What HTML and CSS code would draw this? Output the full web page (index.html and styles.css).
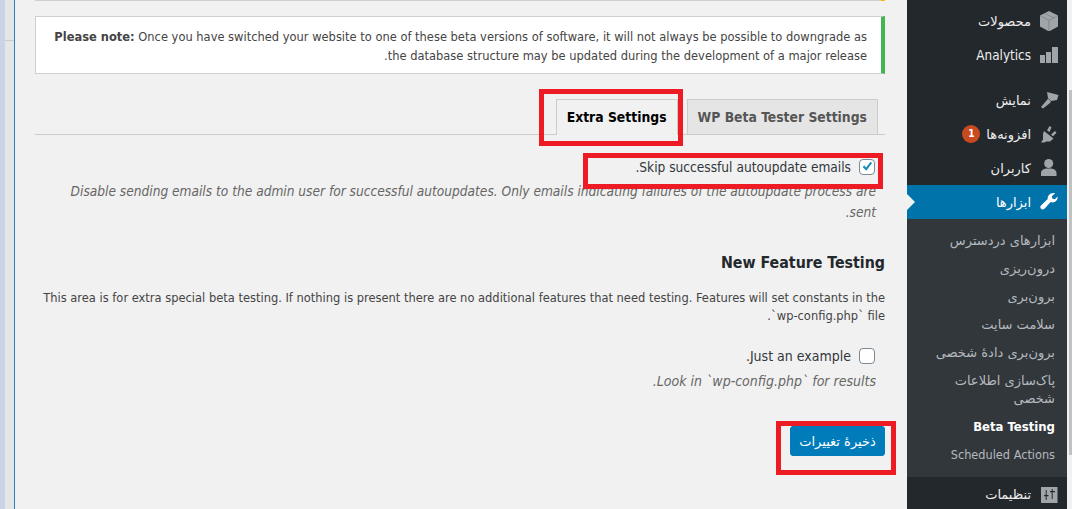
FILE: index.html
```html
<!DOCTYPE html>
<html lang="fa" dir="rtl">
<head>
    <meta charset="UTF-8">
    <title>Beta Testing</title>
    <link rel="stylesheet" href="styles.css">
</head>
<body>
<div class="page">
    <div class="scrollbar"><div class="scroll-thumb"></div></div>

    <!-- admin menu -->
    <nav class="sidebar">
        <ul class="menu">
            <li class="menu-item">
                <svg class="menu-icon" viewBox="0 0 20 20"><path d="M10 0l9 4.500v11L10 20.500 1 15.500v-11z"/><path class="seam" d="M1 4.500l9 5 9-5M10 9.500V20M6 2.500l9 4.500"/></svg>
                <span class="fa">محصولات</span>
            </li>
            <li class="menu-item menu-sep">
                <svg class="menu-icon" viewBox="0 0 20 20"><path d="M1 10h5v8H1zM7 7h5v11H7zM13 2h6v16h-6z"/></svg>
                <span>Analytics</span>
            </li>
            <li class="menu-item">
                <svg class="menu-icon" viewBox="0 0 20 20"><path d="M8 2l11.500 3L18 10l-6 1-3-3z"/><path d="M9 8.500l3 3-1 1.500-7 5.500L2 17l6-7z"/></svg>
                <span class="fa">نمایش</span>
            </li>
            <li class="menu-item">
                <svg class="menu-icon" viewBox="0 0 20 20"><path d="M5 7l9.500 7.500-3.500 3H7.500L5 18.500H2l2-3V10z"/><path d="M8 6.500l2.500-4.500 2 1.200-2 4.800zM12 10.500L16 7l1.500 1.800-3.500 3.500z"/></svg>
                <span class="fa">افزونه‌ها</span>
                <span class="badge">1</span>
            </li>
            <li class="menu-item">
                <svg class="menu-icon" viewBox="0 0 20 20"><circle cx="9.700" cy="5.500" r="4.500"/><path d="M2 18v-3c0-3 3-4 5-4.500h5.500c2 .5 5 1.500 5 4.500v3z"/></svg>
                <span class="fa">کاربران</span>
            </li>
            <li class="menu-item current">
                <svg class="menu-icon" viewBox="0 0 20 20"><path d="M18.500 4.500c.6 2.800-1.600 6-5 6-.7 0-1.300-.1-1.900-.4L5.500 16.800c-1 1-2.600 1-3.500 0-.9-1-.9-2.400 0-3.300L8.700 7C8.300 3.800 11 1 14.500 1c.6 0 1.100.1 1.600.3l-3.300 3 .7 2.400 2.400.6z"/></svg>
                <span class="fa">ابزارها</span>
            </li>
        </ul>
        <ul class="submenu">
            <li class="fa">ابزارهای دردسترس</li>
            <li class="fa">درون‌ریزی</li>
            <li class="fa">برون‌بری</li>
            <li class="fa">سلامت سایت</li>
            <li class="fa">برون‌بری دادهٔ شخصی</li>
            <li class="fa">پاک‌سازی اطلاعات شخصی</li>
            <li class="sub-current">Beta Testing</li>
            <li>Scheduled Actions</li>
        </ul>
        <ul class="menu">
            <li class="menu-item">
                <svg class="menu-icon" viewBox="0 0 20 20"><path fill-rule="evenodd" d="M2 3h16.500v16H2zM6.700 6v5H5v1.200h1.700V16h1v-3.800h1.800V11H7.700V6zM12.700 5v2H11v1.200h1.700V15h1V8.200H16V7h-2.300V5z"/></svg>
                <span class="fa">تنظیمات</span>
            </li>
        </ul>
    </nav>

    <!-- content -->
    <main class="content">
        <div class="top-notice"></div>
        <div class="notice">
            <p><strong>Please note:</strong> Once you have switched your website to one of these beta versions of software, it will not always be possible to downgrade as the database structure may be updated during the development of a major release.</p>
        </div>

        <div class="tabs">
            <a class="tab">WP Beta Tester Settings</a>
            <a class="tab tab-active">Extra Settings</a>
        </div>

        <label class="check-row check-row-first">
            <span class="checkbox">
                <svg viewBox="0 0 16 16"><path d="M3 8l1.800-1.800 2.200 2.300 5-6.500 1.800 1.300-6.600 9z"/></svg>
            </span>
            <span>Skip successful autoupdate emails.</span>
        </label>
        <p class="desc desc-long">Disable sending emails to the admin user for successful autoupdates. Only emails indicating failures of the autoupdate process are sent.</p>

        <h2 class="section-title">New Feature Testing</h2>
        <p class="section-text">This area is for extra special beta testing. If nothing is present there are no additional features that need testing. Features will set constants in the `wp-config.php` file.</p>

        <label class="check-row check-row-second">
            <span class="checkbox"></span>
            <span>Just an example.</span>
        </label>
        <p class="desc">Look in `wp-config.php` for results.</p>

        <button class="save-button fa">ذخیرهٔ تغییرات</button>
    </main>

    <div class="left-strip"><div class="left-mark"></div></div>
</div>

<!-- red annotation boxes -->
<div class="mark mark-tab"></div>
<div class="mark mark-check"></div>
<div class="mark mark-save"></div>
</body>
</html>
```

FILE: styles.css
```css
html, body {
    margin: 0;
    padding: 0;
    height: 509px;
    overflow: hidden;
    background: #f1f1f1;
    color: #444;
    font-family: "DejaVu Sans Condensed", "DejaVu Sans", sans-serif;
    font-size: 12.75px;
}

.fa {
    font-family: "DejaVu Sans", sans-serif;
    font-size: 13px;
}

.page {
    display: flex;
    height: 509px;
}

/* window edge on the left */
.left-strip {
    width: 14px;
    padding-top: 40px;
    background: linear-gradient(to right, #c9d5e6 5px, #e4e6e8 5px);
    border-right: 1px solid #2a7fc0;
}

.left-mark {
    width: 9px;
    height: 1px;
    background: #ccc;
}

.scrollbar {
    width: 5px;
    padding-top: 90px;
    background: #f1f1f1;
}

.scroll-thumb {
    width: 3px;
    height: 365px;
    background: #c1c1c1;
}

/* sidebar */
.sidebar {
    position: relative;
    width: 160px;
    padding-top: 4px;
    background: #23282d;
}

.menu, .submenu {
    list-style: none;
    margin: 0;
    padding: 0;
}

.menu-item {
    position: relative;
    display: flex;
    align-items: center;
    height: 34px;
    color: #eee;
    font-size: 13.4px;
}

.menu-sep {
    margin-bottom: 11px;
}

.menu-icon {
    width: 20px;
    height: 20px;
    margin: 0 8px;
    fill: #a0a5aa;
    flex: none;
}

.seam {
    fill: none;
    stroke: #7d8287;
    stroke-width: 0.8;
}

.badge {
    width: 18px;
    height: 18px;
    margin-right: 6px;
    border-radius: 50%;
    background: #ca4a1f;
    color: #fff;
    font-size: 10px;
    font-weight: bold;
    line-height: 18px;
    text-align: center;
}

.current {
    background: #0073aa;
    color: #fff;
}

.current .menu-icon {
    fill: #fff;
}

.current::after {
    content: "";
    position: absolute;
    left: 0;
    top: 9px;
    border: 8px solid transparent;
    border-left-color: #f1f1f1;
    border-right: 0;
}

.submenu {
    padding: 8px 0;
    background: #32373c;
    color: #b4b9be;
    font-size: 12.6px;
}

.submenu li {
    padding: 5px 12px;
    line-height: 18px;
}

.submenu .sub-current {
    color: #fff;
    font-size: 13px;
    font-weight: bold;
}

/* main column */
.content {
    flex: 1;
    padding: 0 22px 0 20px;
    min-width: 0;
}

.top-notice {
    height: 1px;
    background: #ccd0d4;
    border-right: 4px solid #ffb900;
}

.notice {
    margin-top: 15px;
    padding: 10px 14px 8px 18px;
    background: #fff;
    border: 1px solid #ccd0d4;
    border-right: 4px solid #46b450;
    height: 38px;
}

.notice p {
    margin: 0;
    line-height: 19px;
}

.tabs {
    display: flex;
    gap: 9px;
    margin-top: 25px;
    padding-right: 7px;
    border-bottom: 1px solid #ccc;
    height: 35px;
}

.tab {
    height: 34px;
    padding: 0 10px;
    border: 1px solid #ccc;
    border-bottom: 0;
    background: #e5e5e5;
    color: #555;
    font-size: 13.8px;
    font-weight: bold;
    line-height: 34px;
}

.tab-active {
    height: 35px;
    background: #f1f1f1;
    color: #000;
}

.check-row {
    display: flex;
    align-items: center;
    gap: 8px;
    color: #32373c;
    font-size: 14px;
}

.check-row-first {
    margin-top: 24px;
    font-size: 13.6px;
}

.check-row-second {
    margin-top: 23px;
    margin-bottom: 7px;
}

.checkbox {
    display: block;
    width: 14px;
    height: 14px;
    margin-right: 10px;
    background: #fff;
    border: 1px solid #7e8993;
    border-radius: 4px;
}

.checkbox svg {
    display: block;
    width: 14px;
    height: 14px;
    fill: #1e8cbe;
}

.desc {
    margin: 6px 9px 0 0;
    color: #666;
    font-size: 14px;
    font-style: italic;
    line-height: 21px;
}

.desc-long {
    margin-left: 30px;
    font-size: 13.6px;
}

.section-title {
    margin: 30px 0 0;
    color: #23282d;
    font-size: 15.8px;
    font-weight: bold;
    line-height: 20px;
}

.section-text {
    margin: 16px 0 0;
    line-height: 18px;
}

.save-button {
    display: block;
    margin-top: 34px;
    width: 95px;
    height: 30px;
    padding: 0;
    border: 1px solid #007cba;
    border-radius: 3px;
    background: #007cba;
    color: #fff;
}

/* red boxes drawn over the screenshot */
.mark {
    position: absolute;
    box-sizing: border-box;
    border: 5px solid #ed1c24;
}

.mark-tab {
    left: 539px;
    top: 89px;
    width: 144px;
    height: 57px;
}

.mark-check {
    left: 583px;
    top: 153px;
    width: 300px;
    height: 36px;
}

.mark-save {
    left: 776px;
    top: 421px;
    width: 120px;
    height: 54px;
}
```
